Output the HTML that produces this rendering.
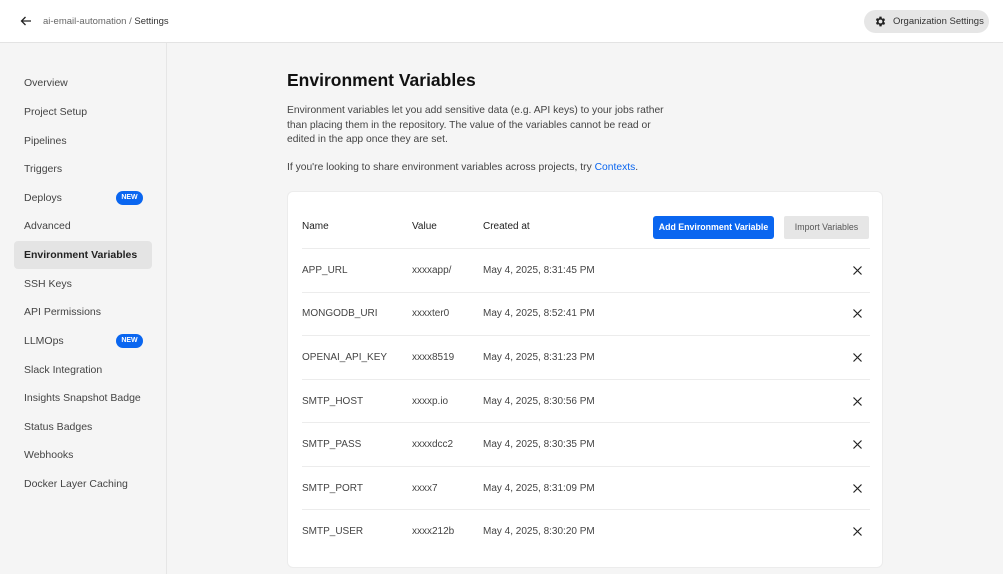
<!DOCTYPE html>
<html><head><style>
*{box-sizing:border-box;margin:0;padding:0}
body{width:1003px;height:574px;overflow:hidden;background:#f5f5f5;font-family:"Liberation Sans",sans-serif;color:#333;position:relative}
.hdr{position:absolute;left:0;top:0;width:1003px;height:43px;background:#fff;border-bottom:1px solid #e3e3e3}
.crumb{position:absolute;left:43px;top:16px;font-size:9.5px;color:#666}
.crumb b{color:#333;font-weight:normal}
.org{position:absolute;left:864px;top:10px;width:125px;height:23px;border-radius:12px;background:#e6e6e6;font-size:9.5px;color:#333;padding:6px 0 0 29px}
.side{position:absolute;left:0;top:43px;width:167px;height:531px;border-right:1px solid #e6e6e6}
.item{position:absolute;left:24px;font-size:10.5px;color:#444}
.sel{position:absolute;left:14px;top:241px;width:138px;height:28px;background:#e4e4e4;border-radius:4px}
.new{position:absolute;left:116px;width:27px;height:14px;border-radius:7px;background:#0a66f0;color:#fff;font-size:7px;font-weight:bold;text-align:center;line-height:14px}
h1{position:absolute;left:287px;top:70px;font-size:17.5px;font-weight:bold;color:#111}
.p{position:absolute;left:287px;font-size:10.3px;line-height:14.5px;color:#444;width:385px}
.card{position:absolute;left:287px;top:191px;width:596px;height:377px;background:#fff;border-radius:6px;border:1px solid #ececec}
.t{position:absolute;font-size:10px;color:#444}
.th{color:#222}
.line{position:absolute;left:14px;width:568px;height:1px;background:#ececec}
.btn1{position:absolute;left:365px;top:24px;width:121px;height:23px;background:#0a66f0;border-radius:3px;color:#fff;font-size:8.8px;font-weight:bold;text-align:center;line-height:23px}
.btn2{position:absolute;left:496px;top:24px;width:85px;height:23px;background:#e6e6e6;border-radius:2px;color:#555;font-size:8.8px;text-align:center;line-height:23px}
.x{position:absolute;left:565px;width:9px;height:9px}
</style></head><body>
<div class="hdr">
<svg style="position:absolute;left:20px;top:15px" width="12" height="12" viewBox="0 0 12 12"><path d="M11 6H1.5M5.5 2L1.5 6l4 4" stroke="#222" stroke-width="1.3" fill="none"/></svg>
<div class="crumb">ai-email-automation / <b>Settings</b></div>
<div class="org"><svg style="position:absolute;left:10px;top:5px" width="13" height="13" viewBox="0 0 24 24"><path fill="#222" d="M19.4 13a7.5 7.5 0 000-2l2.1-1.6-2-3.5-2.5 1a7.3 7.3 0 00-1.7-1L15 3h-4l-.4 2.7a7.3 7.3 0 00-1.7 1l-2.5-1-2 3.5L6.6 11a7.5 7.5 0 000 2l-2.1 1.6 2 3.5 2.5-1a7.3 7.3 0 001.7 1L11 21h4l.4-2.7a7.3 7.3 0 001.7-1l2.5 1 2-3.5zM13 15.5a3.5 3.5 0 110-7 3.5 3.5 0 010 7z" transform="translate(-1 0)"/></svg>Organization Settings</div>
</div>
<div class="side"></div>
<div class="sel"></div>
<div class="item" style="top:77px">Overview</div>
<div class="item" style="top:106px">Project Setup</div>
<div class="item" style="top:135px">Pipelines</div>
<div class="item" style="top:163px">Triggers</div>
<div class="item" style="top:192px">Deploys</div><div class="new" style="top:191px">NEW</div>
<div class="item" style="top:220px">Advanced</div>
<div class="item" style="top:249px;color:#222;font-weight:bold">Environment Variables</div>
<div class="item" style="top:278px">SSH Keys</div>
<div class="item" style="top:306px">API Permissions</div>
<div class="item" style="top:335px">LLMOps</div><div class="new" style="top:334px">NEW</div>
<div class="item" style="top:364px">Slack Integration</div>
<div class="item" style="top:392px">Insights Snapshot Badge</div>
<div class="item" style="top:421px">Status Badges</div>
<div class="item" style="top:449px">Webhooks</div>
<div class="item" style="top:478px">Docker Layer Caching</div>
<h1>Environment Variables</h1>
<div class="p" style="top:104px">Environment variables let you add sensitive data (e.g. API keys) to your jobs rather than placing them in the repository. The value of the variables cannot be read or edited in the app once they are set.</div>
<div class="p" style="top:161px">If you're looking to share environment variables across projects, try <span style="color:#0a66f0">Contexts</span>.</div>
<div class="card">
<div class="t th" style="left:14px;top:29px">Name</div>
<div class="t th" style="left:124px;top:29px">Value</div>
<div class="t th" style="left:195px;top:29px">Created at</div>
<div class="btn1">Add Environment Variable</div>
<div class="btn2">Import Variables</div>
<div class="line" style="top:56px"></div>
<div class="t" style="left:14px;top:73px">APP_URL</div><div class="t" style="left:124px;top:73px">xxxxapp/</div><div class="t" style="left:195px;top:73px">May 4, 2025, 8:31:45 PM</div><svg class="x" style="top:74px" viewBox="0 0 9 9"><path d="M.5.5l8 8M8.5.5l-8 8" stroke="#222" stroke-width="1.2"/></svg>
<div class="line" style="top:100px"></div>
<div class="t" style="left:14px;top:116px">MONGODB_URI</div><div class="t" style="left:124px;top:116px">xxxxter0</div><div class="t" style="left:195px;top:116px">May 4, 2025, 8:52:41 PM</div><svg class="x" style="top:117px" viewBox="0 0 9 9"><path d="M.5.5l8 8M8.5.5l-8 8" stroke="#222" stroke-width="1.2"/></svg>
<div class="line" style="top:143px"></div>
<div class="t" style="left:14px;top:160px">OPENAI_API_KEY</div><div class="t" style="left:124px;top:160px">xxxx8519</div><div class="t" style="left:195px;top:160px">May 4, 2025, 8:31:23 PM</div><svg class="x" style="top:161px" viewBox="0 0 9 9"><path d="M.5.5l8 8M8.5.5l-8 8" stroke="#222" stroke-width="1.2"/></svg>
<div class="line" style="top:187px"></div>
<div class="t" style="left:14px;top:204px">SMTP_HOST</div><div class="t" style="left:124px;top:204px">xxxxp.io</div><div class="t" style="left:195px;top:204px">May 4, 2025, 8:30:56 PM</div><svg class="x" style="top:205px" viewBox="0 0 9 9"><path d="M.5.5l8 8M8.5.5l-8 8" stroke="#222" stroke-width="1.2"/></svg>
<div class="line" style="top:230px"></div>
<div class="t" style="left:14px;top:247px">SMTP_PASS</div><div class="t" style="left:124px;top:247px">xxxxdcc2</div><div class="t" style="left:195px;top:247px">May 4, 2025, 8:30:35 PM</div><svg class="x" style="top:248px" viewBox="0 0 9 9"><path d="M.5.5l8 8M8.5.5l-8 8" stroke="#222" stroke-width="1.2"/></svg>
<div class="line" style="top:274px"></div>
<div class="t" style="left:14px;top:291px">SMTP_PORT</div><div class="t" style="left:124px;top:291px">xxxx7</div><div class="t" style="left:195px;top:291px">May 4, 2025, 8:31:09 PM</div><svg class="x" style="top:292px" viewBox="0 0 9 9"><path d="M.5.5l8 8M8.5.5l-8 8" stroke="#222" stroke-width="1.2"/></svg>
<div class="line" style="top:317px"></div>
<div class="t" style="left:14px;top:334px">SMTP_USER</div><div class="t" style="left:124px;top:334px">xxxx212b</div><div class="t" style="left:195px;top:334px">May 4, 2025, 8:30:20 PM</div><svg class="x" style="top:335px" viewBox="0 0 9 9"><path d="M.5.5l8 8M8.5.5l-8 8" stroke="#222" stroke-width="1.2"/></svg>
</div>
</body></html>
